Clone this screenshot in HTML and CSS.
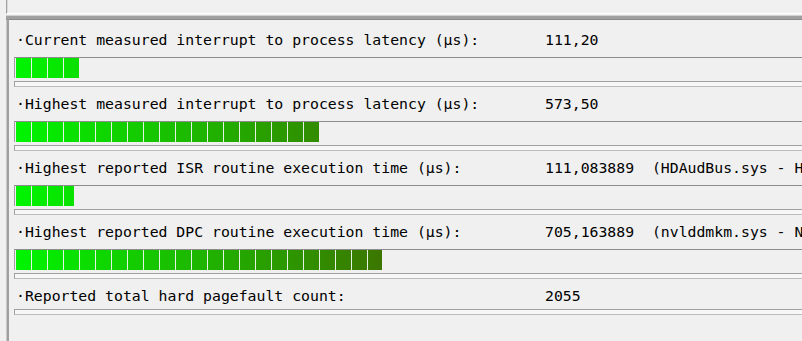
FILE: index.html
```html
<!DOCTYPE html>
<html lang="en">
<head>
    <meta charset="UTF-8">
    <title>LatencyMon - Stats</title>
    <link rel="stylesheet" href="styles.css">
</head>
<body>
    <!-- panel above -->
    <div class="top-panel"></div>

    <!-- stats -->
    <div class="group">
        <div class="row">
            <div class="label"><span class="name">·Current measured interrupt to process latency (µs):</span><span class="value">111,20</span></div>
            <div class="bar"><div class="fill" style="width: 63px;"></div></div>
            <div class="track"></div>
        </div>

        <div class="row">
            <div class="label"><span class="name">·Highest measured interrupt to process latency (µs):</span><span class="value">573,50</span></div>
            <div class="bar"><div class="fill" style="width: 303px;"></div></div>
            <div class="track"></div>
        </div>

        <div class="row">
            <div class="label"><span class="name">·Highest reported ISR routine execution time (µs):</span><span class="value">111,083889  (HDAudBus.sys - High Definition Audio Bus Driver, Microsoft Corporation)</span></div>
            <div class="bar"><div class="fill" style="width: 58px;"></div></div>
            <div class="track"></div>
        </div>

        <div class="row">
            <div class="label"><span class="name">·Highest reported DPC routine execution time (µs):</span><span class="value">705,163889  (nvlddmkm.sys - NVIDIA Windows Kernel Mode Driver, Version 546.33 )</span></div>
            <div class="bar"><div class="fill" style="width: 366px;"></div></div>
            <div class="track"></div>
        </div>

        <div class="row">
            <div class="label"><span class="name">·Reported total hard pagefault count:</span><span class="value">2055</span></div>
            <div class="track"></div>
        </div>
    </div>
</body>
</html>
```

FILE: styles.css
```css
body {
    margin: 0;
    padding: 0;
    background: #f0f0f0;
    font-family: "DejaVu Sans Mono", "Liberation Mono", monospace;
    font-size: 14.8px;
    color: #000;
    overflow: hidden;
    width: 802px;
    height: 341px;
}

.top-panel {
    height: 13px;
    margin-left: 6px;
    border-left: 1px solid #a0a0a0;
    border-bottom: 1px solid #ffffff;
    box-shadow: inset 1px 0 0 #dadada;
}

.group {
    margin-top: 1px;
    margin-left: 6px;
    width: 1200px;
    height: 400px;
    border-top: 1px solid #d4d4d4;
    border-left: 1px solid #c8c8c8;
}

.group-inner,
.group > .row:first-child {
    margin-top: 0;
}

.group {
    position: relative;
}

.group::before {
    content: '';
    display: block;
    height: 3px;
    background: #a0a0a0;
    border-bottom: 1px solid #8a8a8a;
    margin-left: -1px;
}

.group::after {
    content: '';
    position: absolute;
    top: 0;
    left: 0;
    width: 2px;
    height: 100%;
    background: #a0a0a0;
}

.row {
    padding-left: 9px;
    padding-top: 7px;
}

.group > .row:first-of-type {
    padding-top: 10px;
}

.label {
    height: 20px;
    line-height: 20px;
    white-space: pre;
    overflow: hidden;
}

.label .name {
    display: inline-block;
    width: 529px;
}

.bar {
    margin-top: 7px;
    margin-left: -2px;
    height: 20px;
    border-top: 1px solid #8c8c8c;
    border-left: 1px solid #a0a0a0;
    padding: 0 0 0 1px;
}

.fill {
    height: 20px;
    background:
        linear-gradient(to right, transparent 15px, #e6f2e6 15px) 0 0 / 16px 100% repeat-x,
        linear-gradient(to right, #00f500 0, #3c7600 366px) 0 0 / 366px 100% no-repeat;
    background-color: #3c7600;
}

.track {
    margin-top: 3px;
    margin-left: -2px;
    height: 4px;
    background: #f7f7f7;
    border: 1px solid #a0a0a0;
    border-bottom-color: #bcbcbc;
}
```
